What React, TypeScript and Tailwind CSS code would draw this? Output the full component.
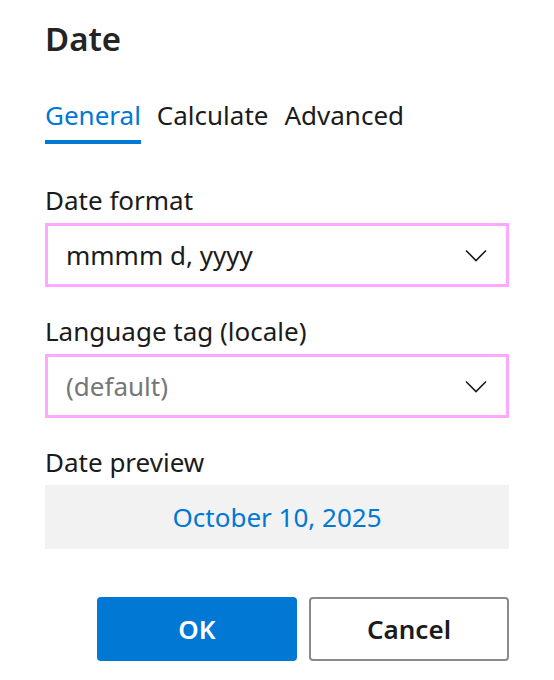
import React, { useState } from 'react';

const font = { fontFamily: '"Noto Sans", "Open Sans", sans-serif' };

const Chevron: React.FC = () => (
  <svg width="22" height="13" viewBox="0 0 22 13" fill="none" className="shrink-0">
    <path d="M1 1.5 L11 11.5 L21 1.5" stroke="#1a1a1a" strokeWidth="1.6" />
  </svg>
);

const SelectBox: React.FC<{ value: string; muted?: boolean }> = ({ value, muted }) => (
  <div className="flex h-[64px] w-[464px] items-center justify-between border-[3px] border-[#ffa8ff] bg-white pl-[18px] pr-[19px]">
    <span className={`text-[26px] leading-none ${muted ? 'text-[#767676]' : 'text-[#1b1b1b]'}`}>{value}</span>
    <Chevron />
  </div>
);

const App: React.FC = () => {
  const [tab, setTab] = useState('General');
  const tabs = ['General', 'Calculate', 'Advanced'];

  return (
    <div className="h-[680px] w-[554px] bg-white pl-[45px] text-[#1b1b1b]" style={font}>
      <h1 className="pt-[15px] text-[33px] font-semibold leading-[48px] text-[#242424]">Date</h1>

      <div className="mt-[32px] flex gap-[16px]">
        {tabs.map((t) => (
          <button
            key={t}
            onClick={() => setTab(t)}
            className={`flex flex-col text-[26px] leading-[40px] ${tab === t ? 'text-[#0078d4]' : 'text-[#1b1b1b]'}`}
          >
            <span>{t}</span>
            <span className={`mt-[5px] h-[4px] w-full ${tab === t ? 'bg-[#0078d4]' : 'bg-transparent'}`} />
          </button>
        ))}
      </div>

      <div className="mt-[39px] text-[26px] leading-[34px]">Date format</div>
      <div className="mt-[6px]">
        <SelectBox value="mmmm d, yyyy" />
      </div>

      <div className="mt-[27px] text-[26px] leading-[34px]">Language tag (locale)</div>
      <div className="mt-[6px]">
        <SelectBox value="(default)" muted />
      </div>

      <div className="mt-[27px] text-[26px] leading-[34px]">Date preview</div>
      <div className="mt-[6px] flex h-[64px] w-[464px] items-center justify-center bg-[#f2f2f2] text-[26px] text-[#0078d4]">
        October 10, 2025
      </div>

      <div className="mt-[48px] flex w-[464px] justify-end gap-[12px]">
        <button className="h-[64px] w-[200px] rounded-[4px] bg-[#0078d4] text-[26px] font-semibold text-white">OK</button>
        <button className="h-[64px] w-[200px] rounded-[4px] border-2 border-[#8a8a8a] bg-white text-[26px] font-semibold text-[#1b1b1b]">
          Cancel
        </button>
      </div>
    </div>
  );
};

export default App;
